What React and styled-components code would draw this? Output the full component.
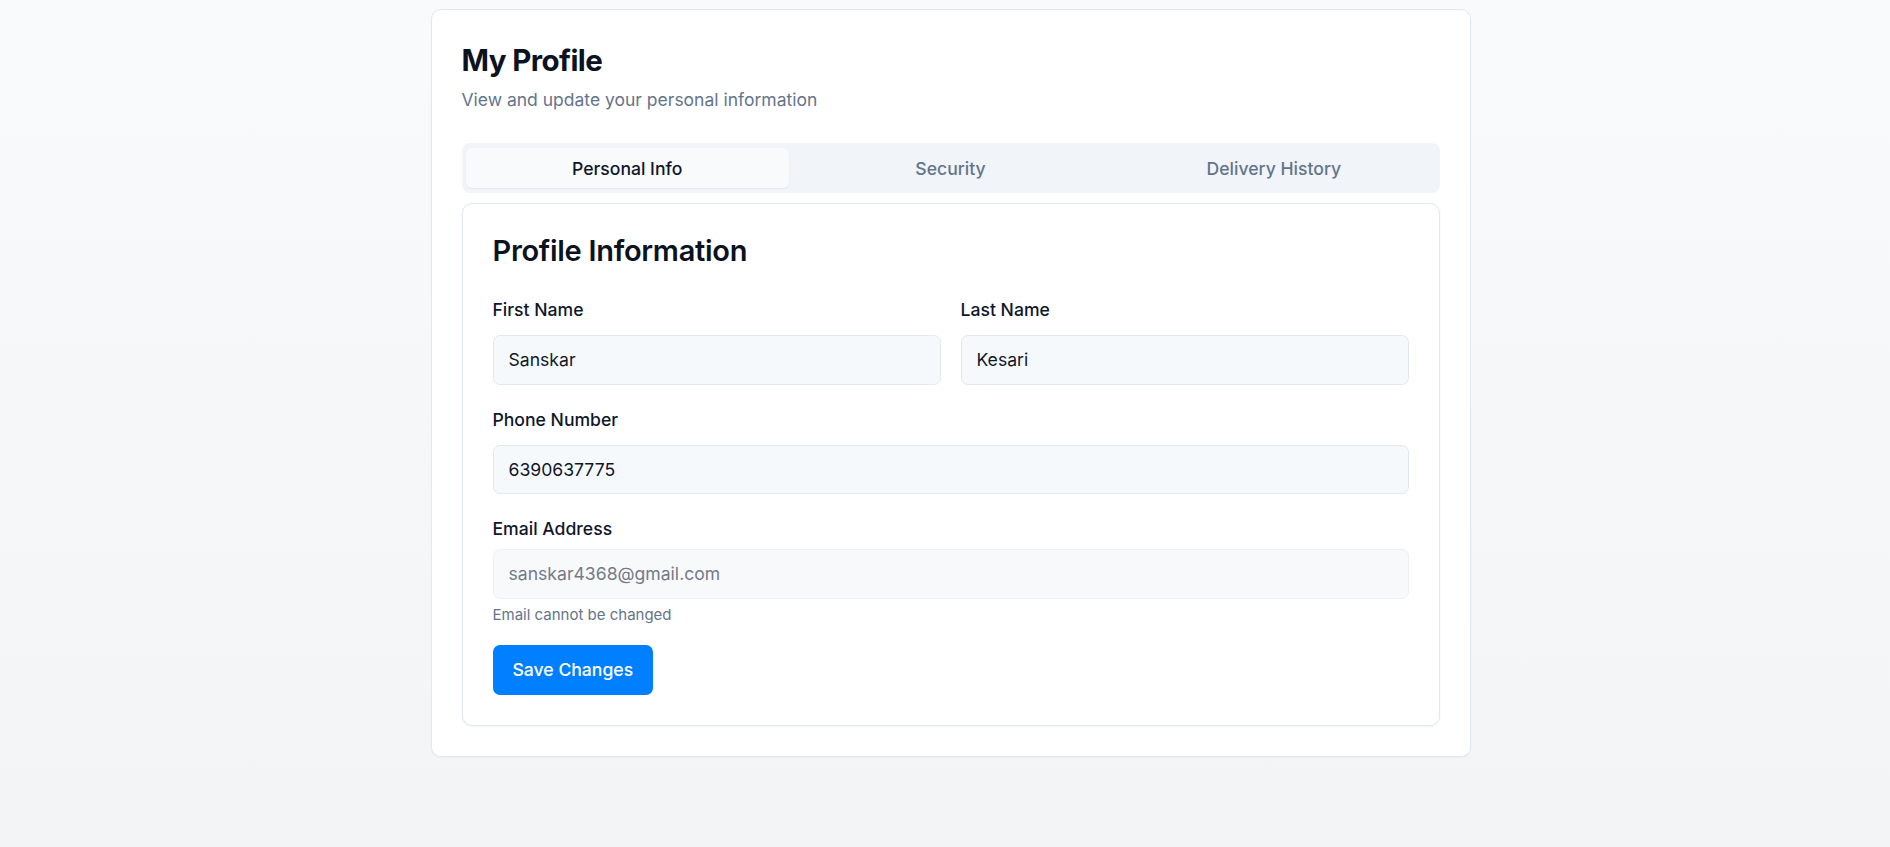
import React, { useState } from "react";
import styled, { createGlobalStyle } from "styled-components";

const GlobalStyle = createGlobalStyle`
    * {
        box-sizing: border-box;
    }

    body {
        margin: 0;
        font-family: Inter, "Noto Sans", "Liberation Sans", sans-serif;
        color: #0f172a;
        -webkit-font-smoothing: antialiased;
    }
`;

const tabs = ["Personal Info", "Security", "Delivery History"];

const App = () => {
    const [active, setActive] = useState(0);

    return (
        <Page>
            <GlobalStyle />
            <Card>
                <Title>My Profile</Title>
                <Subtitle>View and update your personal information</Subtitle>

                <TabList>
                    {tabs.map((tab, index) => (
                        <Tab key={tab} $active={active === index} onClick={() => setActive(index)}>
                            {tab}
                        </Tab>
                    ))}
                </TabList>

                <Panel>
                    <PanelTitle>Profile Information</PanelTitle>

                    <Form onSubmit={(e) => e.preventDefault()}>
                        <Row>
                            <Field>
                                <Label>First Name</Label>
                                <Input defaultValue="Sanskar" />
                            </Field>
                            <Field>
                                <Label>Last Name</Label>
                                <Input defaultValue="Kesari" />
                            </Field>
                        </Row>

                        <Field>
                            <Label>Phone Number</Label>
                            <Input defaultValue="6390637775" />
                        </Field>

                        <Field $tight>
                            <Label>Email Address</Label>
                            <Input defaultValue="sanskar4368@gmail.com" disabled />
                            <Hint>Email cannot be changed</Hint>
                        </Field>

                        <SaveButton type="submit">Save Changes</SaveButton>
                    </Form>
                </Panel>
            </Card>
        </Page>
    );
};

const Page = styled.div`
    min-height: 100vh;
    background: linear-gradient(to bottom, #f8fafc, #f3f4f6);
    display: flex;
    justify-content: center;
    align-items: flex-start;
    padding: 9px 0 0 11px;
`;

const Card = styled.div`
    width: 1040px;
    background: #ffffff;
    border: 1px solid #e2e8f0;
    border-radius: 10px;
    padding: 30px;
    box-shadow: 0 1px 2px rgba(15, 23, 42, 0.04);
`;

const Title = styled.h1`
    margin: 0;
    font-size: 29.5px;
    line-height: 40px;
    font-weight: 650;
    letter-spacing: -0.02em;
    color: #0b1220;
`;

const Subtitle = styled.p`
    margin: 8px 0 31px;
    font-size: 17.5px;
    line-height: 24px;
    color: #64748b;
`;

const TabList = styled.div`
    display: grid;
    grid-template-columns: repeat(3, 1fr);
    padding: 5px 4px;
    background: #f1f5f9;
    border-radius: 8px;
    height: 50px;
`;

const Tab = styled.button`
    border: none;
    border-radius: 6px;
    font-family: inherit;
    font-size: 17.6px;
    font-weight: 500;
    cursor: pointer;
    background: ${(p) => (p.$active ? "#f8fafc" : "transparent")};
    color: ${(p) => (p.$active ? "#0f172a" : "#64748b")};
    box-shadow: ${(p) => (p.$active ? "0 1px 2px rgba(15, 23, 42, 0.06)" : "none")};
`;

const Panel = styled.div`
    margin-top: 10px;
    background: #ffffff;
    border: 1px solid #e2e8f0;
    border-radius: 10px;
    padding: 30px;
    box-shadow: 0 1px 2px rgba(15, 23, 42, 0.05);
`;

const PanelTitle = styled.h2`
    margin: 0 0 31px;
    font-size: 29px;
    line-height: 33px;
    font-weight: 600;
    letter-spacing: -0.01em;
    color: #0b1220;
`;

const Form = styled.form`
    display: flex;
    flex-direction: column;
    gap: 23px;
`;

const Row = styled.div`
    display: grid;
    grid-template-columns: 1fr 1fr;
    gap: 20px;
`;

const Field = styled.div`
    display: flex;
    flex-direction: column;

    label {
        margin-bottom: ${(p) => (p.$tight ? "8px" : "13px")};
    }
`;

const Label = styled.label`
    font-size: 17.6px;
    line-height: 24px;
    font-weight: 500;
    color: #0f172a;
`;

const Input = styled.input`
    height: 49.5px;
    padding: 0 15px;
    border: 1px solid ${(p) => (p.disabled ? "#edf1f6" : "#e2e8f0")};
    border-radius: 7px;
    background: ${(p) => (p.disabled ? "#f8f9fb" : "#f6f9fc")};
    font-family: inherit;
    font-size: 17.6px;
    color: ${(p) => (p.disabled ? "#737b87" : "#0f172a")};
    outline: none;
`;

const Hint = styled.span`
    margin-top: 6px;
    font-size: 15px;
    line-height: 20px;
    color: #64748b;
`;

const SaveButton = styled.button`
    align-self: flex-start;
    margin-top: -3px;
    height: 50px;
    padding: 0 20px;
    border: none;
    border-radius: 7px;
    background: #0080ff;
    color: #ffffff;
    font-family: inherit;
    font-size: 17.6px;
    font-weight: 500;
    cursor: pointer;
`;

export default App;
